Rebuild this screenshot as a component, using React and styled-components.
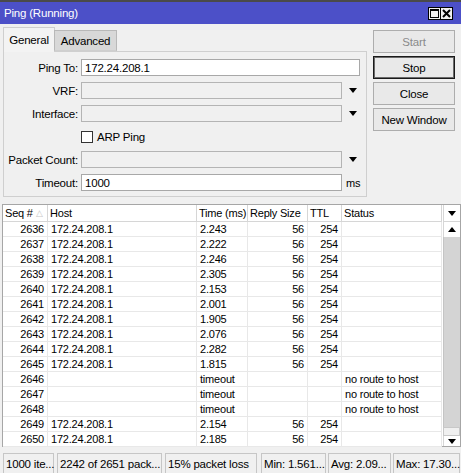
import React from "react";
import styled, { createGlobalStyle } from "styled-components";

const Global = createGlobalStyle`
  html, body { margin: 0; padding: 0; background: #f0f0f0; }
  body { font-family: "Liberation Sans", Arial, sans-serif; font-size: 11px; letter-spacing: -0.2px; color: #000; }
  * { box-sizing: border-box; }
`;

const Window = styled.div`
  width: 461px;
  height: 473px;
  display: flex;
  flex-direction: column;
  background: #f0f0f0;
  overflow: hidden;
`;

const TitleBar = styled.div`
  height: 24px;
  border-top: 2px solid #4a4a4a;
  background: #4c50c8;
  color: #fff;
  font-size: 11.5px;
  display: flex;
  align-items: center;
  justify-content: space-between;
  padding: 0 8px 0 4px;
`;

const TitleButtons = styled.div`
  display: flex;
`;

const TitleBtn = styled.div`
  width: 13px;
  height: 13px;
  border: 1px solid #000;
  background: #f0f0f0;
  display: flex;
  align-items: center;
  justify-content: center;
  & + & { margin-left: -1px; }
`;

const Top = styled.div`
  display: flex;
  padding: 3px 0 0 3px;
`;

const LeftCol = styled.div`
  width: 364px;
  display: flex;
  flex-direction: column;
`;

const TabStrip = styled.div`
  display: flex;
  align-items: flex-end;
  height: 24px;
  position: relative;
  z-index: 1;
`;

const Tab = styled.div`
  height: ${(p) => (p.$active ? 25 : 21)}px;
  width: ${(p) => p.$w}px;
  border: 1px solid ${(p) => (p.$active ? "#cfcfcf" : "#b8b8b8")};
  border-bottom: ${(p) => (p.$active ? "none" : "1px solid #cfcfcf")};
  background: ${(p) => (p.$active ? "#f3f3f3" : "#d8d8d8")};
  margin-bottom: ${(p) => (p.$active ? -1 : 0)}px;
  display: flex;
  align-items: center;
  justify-content: center;
  font-size: 11.5px;
  padding-top: ${(p) => (p.$active ? 0 : 1)}px;
  margin-left: ${(p) => (p.$active ? 0 : -1)}px;
`;

const Panel = styled.div`
  height: 146px;
  border: 1px solid #cfcfcf;
  display: flex;
  flex-direction: column;
  gap: 6px;
  padding-top: 7px;
`;

const FormRow = styled.div`
  height: 17px;
  display: flex;
  align-items: center;
`;

const Label = styled.div`
  width: 74px;
  text-align: right;
  margin-right: 3px;
  white-space: nowrap;
  font-size: 11.5px;
`;

const Input = styled.div`
  width: ${(p) => p.$w}px;
  height: 17px;
  border: 1px solid ${(p) => (p.$disabled ? "#b4b4b4" : "#a8a8a8")};
  background: ${(p) => (p.$disabled ? "#f0f0f0" : "#fff")};
  padding: 0 3px;
  display: flex;
  align-items: center;
  font-size: 11.5px;
`;

const ArrowBox = styled.div`
  width: 18px;
  height: 17px;
  display: flex;
  align-items: center;
  justify-content: center;
  padding-left: 3px;
`;

const DownTri = styled.div`
  width: 0;
  height: 0;
  border-left: 4px solid transparent;
  border-right: 4px solid transparent;
  border-top: 5px solid #000;
`;

const UpTri = styled.div`
  width: 0;
  height: 0;
  border-left: 4px solid transparent;
  border-right: 4px solid transparent;
  border-bottom: 5px solid #000;
`;

const Unit = styled.div`
  margin-left: 4px;
`;

const Check = styled.div`
  width: 12px;
  height: 12px;
  border: 1px solid #333;
  background: #fff;
  margin-left: 77px;
  margin-right: 4px;
`;

const CheckLabel = styled.span`
  font-size: 11.5px;
`;

const RightCol = styled.div`
  margin-left: 6px;
  width: 82px;
  display: flex;
  flex-direction: column;
  gap: 3px;
  padding-top: 3px;
`;

const Button = styled.div`
  height: 23px;
  border: 1px solid ${(p) => (p.$focus ? "#1a1a1a" : "#adadad")};
  box-shadow: ${(p) => (p.$focus ? "inset 0 0 0 1px #6a6a6a" : "none")};
  background: #e9e9e9;
  color: ${(p) => (p.$disabled ? "#8a8a8a" : "#000")};
  display: flex;
  align-items: center;
  justify-content: center;
  font-size: 11.5px;
`;

const Table = styled.div`
  margin: 7px 0 0 2px;
  width: 459px;
  height: 243px;
  border: 1px solid #a6a6a6;
  background: #fff;
  display: flex;
`;

const Main = styled.div`
  flex: 1;
  display: flex;
  flex-direction: column;
`;

const Row = styled.div`
  display: flex;
  height: ${(p) => (p.$head ? 17 : 15)}px;
  flex: none;
`;

const Cell = styled.div`
  width: ${(p) => p.$w}px;
  flex: none;
  border-right: 1px solid ${(p) => (p.$head ? "#d6d6d6" : "#e8e8e8")};
  border-bottom: 1px solid ${(p) => (p.$head ? "#d6d6d6" : "#e8e8e8")};
  padding: 0 ${(p) => (p.$right ? 3 : 2)}px 0 ${(p) => (p.$head ? 2 : 3)}px;
  white-space: nowrap;
  overflow: hidden;
  line-height: ${(p) => (p.$head ? 16 : 14)}px;
  display: flex;
  align-items: center;
  justify-content: ${(p) => (p.$right ? "flex-end" : "flex-start")};
`;

const SortMark = styled.span`
  color: #c8c8c8;
  font-size: 9px;
  margin-left: 3px;
`;

const Side = styled.div`
  width: 17px;
  display: flex;
  flex-direction: column;
`;

const HeadDrop = styled.div`
  height: 17px;
  border-bottom: 1px solid #d6d6d6;
  border-left: 1px solid #d6d6d6;
  display: flex;
  align-items: center;
  justify-content: center;
`;

const ScrollBtn = styled.div`
  height: ${(p) => p.$h}px;
  border-left: 1px solid #d6d6d6;
  background: #fff;
  display: flex;
  align-items: center;
  justify-content: center;
`;

const Track = styled.div`
  flex: 1;
  background: #d4d4d4;
  border-left: 1px solid #c4c4c4;
`;

const Thumb = styled.div`
  height: 9px;
  background: #f0f0f0;
  border: 1px solid #c8c8c8;
`;

const StatusBar = styled.div`
  margin-top: 6px;
  height: 20px;
  display: flex;
  padding-left: 3px;
`;

const StatusCell = styled.div`
  width: ${(p) => p.$w}px;
  margin-right: ${(p) => p.$gap}px;
  height: 20px;
  border: 1px solid #c6c6c6;
  border-bottom: none;
  padding-left: 2px;
  display: flex;
  align-items: center;
  white-space: nowrap;
  font-size: 11.5px;
`;

const cols = [
  { k: "seq", t: "Seq #", w: 45, r: true },
  { k: "host", t: "Host", w: 149 },
  { k: "time", t: "Time (ms)", w: 51 },
  { k: "size", t: "Reply Size", w: 60, r: true },
  { k: "ttl", t: "TTL", w: 34, r: true },
  { k: "status", t: "Status", w: 100 },
];

const times = ["2.243", "2.222", "2.246", "2.305", "2.153", "2.001", "1.905", "2.076", "2.282", "1.815"];
const rows = [];
times.forEach((t, i) =>
  rows.push({ seq: 2636 + i, host: "172.24.208.1", time: t, size: "56", ttl: "254", status: "" })
);
[2646, 2647, 2648].forEach((s) =>
  rows.push({ seq: s, host: "", time: "timeout", size: "", ttl: "", status: "no route to host" })
);
rows.push({ seq: 2649, host: "172.24.208.1", time: "2.154", size: "56", ttl: "254", status: "" });
rows.push({ seq: 2650, host: "172.24.208.1", time: "2.185", size: "56", ttl: "254", status: "" });

const status = [
  { t: "1000 ite...", w: 51, g: 3 },
  { t: "2242 of 2651 pack...", w: 105, g: 3 },
  { t: "15% packet loss", w: 92, g: 4 },
  { t: "Min: 1.561...", w: 65, g: 2 },
  { t: "Avg: 2.09...", w: 63, g: 2 },
  { t: "Max: 17.30...", w: 67, g: 0 },
];

export default function App() {
  return (
    <Window>
      <Global />
      <TitleBar>
        <span>Ping (Running)</span>
        <TitleButtons>
          <TitleBtn>
            <svg width="9" height="9" viewBox="0 0 9 9">
              <rect x="0.5" y="0.5" width="8" height="8" fill="none" stroke="#000" strokeWidth="1" />
              <rect x="0" y="0" width="9" height="2" fill="#000" />
            </svg>
          </TitleBtn>
          <TitleBtn>
            <svg width="9" height="9" viewBox="0 0 9 9">
              <path d="M1 1 L8 8 M8 1 L1 8" stroke="#000" strokeWidth="2" />
            </svg>
          </TitleBtn>
        </TitleButtons>
      </TitleBar>

      <Top>
        <LeftCol>
          <TabStrip>
            <Tab $active $w={52}>General</Tab>
            <Tab $w={63}>Advanced</Tab>
          </TabStrip>
          <Panel>
            <FormRow>
              <Label>Ping To:</Label>
              <Input $w={279}>172.24.208.1</Input>
            </FormRow>
            <FormRow>
              <Label>VRF:</Label>
              <Input $w={261} $disabled />
              <ArrowBox><DownTri /></ArrowBox>
            </FormRow>
            <FormRow>
              <Label>Interface:</Label>
              <Input $w={261} $disabled />
              <ArrowBox><DownTri /></ArrowBox>
            </FormRow>
            <FormRow>
              <Check />
              <CheckLabel>ARP Ping</CheckLabel>
            </FormRow>
            <FormRow>
              <Label>Packet Count:</Label>
              <Input $w={261} $disabled />
              <ArrowBox><DownTri /></ArrowBox>
            </FormRow>
            <FormRow>
              <Label>Timeout:</Label>
              <Input $w={261}>1000</Input>
              <Unit>ms</Unit>
            </FormRow>
          </Panel>
        </LeftCol>
        <RightCol>
          <Button $disabled>Start</Button>
          <Button $focus>Stop</Button>
          <Button>Close</Button>
          <Button>New Window</Button>
        </RightCol>
      </Top>

      <Table>
        <Main>
          <Row $head>
            {cols.map((c) => (
              <Cell key={c.k} $w={c.w} $head>
                {c.t}
                {c.k === "seq" && <SortMark>△</SortMark>}
              </Cell>
            ))}
          </Row>
          {rows.map((r) => (
            <Row key={r.seq}>
              {cols.map((c) => (
                <Cell key={c.k} $w={c.w} $right={c.r}>
                  {r[c.k]}
                </Cell>
              ))}
            </Row>
          ))}
        </Main>
        <Side>
          <HeadDrop><DownTri /></HeadDrop>
          <ScrollBtn $h={15}><UpTri /></ScrollBtn>
          <Track />
          <Thumb />
          <ScrollBtn $h={10}><DownTri /></ScrollBtn>
        </Side>
      </Table>

      <StatusBar>
        {status.map((s) => (
          <StatusCell key={s.t} $w={s.w} $gap={s.g}>{s.t}</StatusCell>
        ))}
      </StatusBar>
    </Window>
  );
}
